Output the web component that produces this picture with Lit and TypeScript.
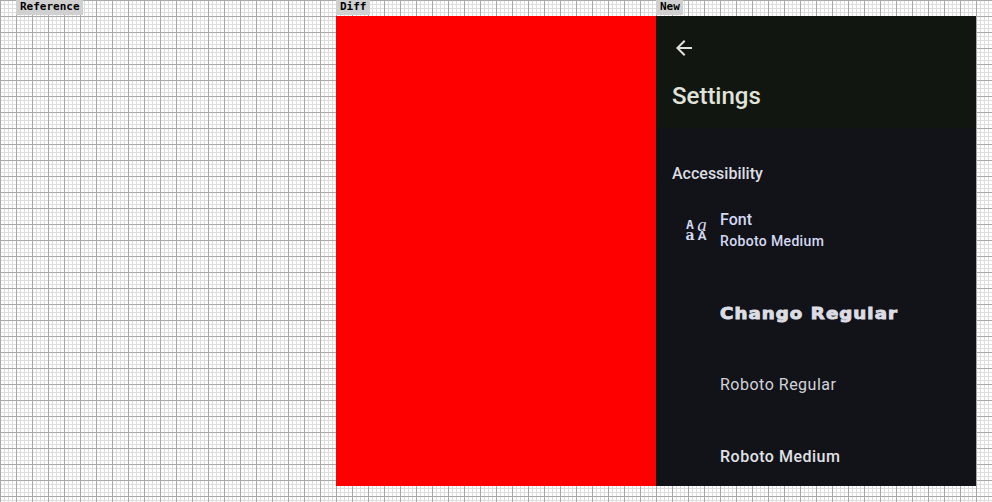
import { LitElement, html, css, svg } from "lit";
import { customElement } from "lit/decorators.js";

const backArrow = svg`<path d="M20 11H7.83l5.59-5.59L12 4l-8 8 8 8 1.41-1.41L7.83 13H20v-2z" fill="currentColor"/>`;

@customElement("app-root")
export class AppRoot extends LitElement {
  static styles = css`
    :host {
      display: block;
      width: 992px;
      height: 502px;
      overflow: hidden;
      font-family: Roboto, sans-serif;
      background-color: #fff;
      background-image:
        linear-gradient(#a8a8a8 1px, transparent 1px),
        linear-gradient(90deg, #a8a8a8 1px, transparent 1px),
        linear-gradient(#dedede 1px, transparent 1px),
        linear-gradient(90deg, #dedede 1px, transparent 1px);
      background-size: 16px 16px, 16px 16px, 4px 4px, 4px 4px;
    }
    .columns {
      display: grid;
      grid-template-columns: repeat(3, 320px);
      padding-left: 16px;
    }
    .tag-row {
      height: 16px;
    }
    .tag {
      width: fit-content;
      height: 15px;
      padding: 0 3px 0 4px;
      background: #d0d0d0;
      color: #000;
      font: bold 11px/14px "DejaVu Sans Mono", monospace;
    }
    .panel {
      height: 470px;
    }
    .diff {
      background: #ff0000;
    }
    .screen {
      background: #121319;
      overflow: hidden;
    }
    .app-bar {
      height: 112px;
      box-sizing: border-box;
      background: #111611;
      color: #e0e3da;
      padding: 20px 16px 0;
    }
    .back {
      display: block;
      width: 24px;
      height: 24px;
    }
    .title {
      margin-top: 20px;
      font-size: 24px;
      line-height: 32px;
      font-weight: 500;
    }
    .section {
      padding: 34px 16px 0;
      font-size: 16px;
      line-height: 24px;
      font-weight: 500;
      color: #dcdde3;
    }
    .header-row {
      display: flex;
      align-items: center;
      height: 72px;
      margin: 8px 0 10px;
      padding-left: 28px;
      gap: 12px;
      color: #d4d9f2;
    }
    .font-icon {
      width: 24px;
      height: 22px;
      flex: none;
      display: grid;
      grid-template-columns: 12px 12px;
      grid-template-rows: 11px 11px;
      justify-items: center;
      font-size: 13px;
      line-height: 11px;
      font-weight: 700;
    }
    .glyph-mono {
      font-family: "DejaVu Sans Mono", monospace;
    }
    .glyph-italic {
      font-family: "Liberation Serif", serif;
      font-style: italic;
      font-size: 19px;
      font-weight: 400;
    }
    .glyph-serif {
      font-family: "DejaVu Serif", serif;
      font-size: 14px;
    }
    .name {
      font-size: 16px;
      line-height: 22px;
      font-weight: 500;
    }
    .sub {
      font-size: 14px;
      line-height: 20px;
      font-weight: 500;
      letter-spacing: 0.35px;
    }
    .option {
      height: 72px;
      display: flex;
      align-items: center;
      padding-left: 64px;
      font-size: 16px;
      letter-spacing: 0.5px;
      color: #d2d3d9;
    }
    .chango {
      display: block;
      margin-top: 4px;
      font-family: "DejaVu Sans", sans-serif;
      font-weight: 700;
      font-size: 15px;
      letter-spacing: 0.9px;
      -webkit-text-stroke: 0.9px currentColor;
      transform: scaleX(1.21);
      transform-origin: left center;
      color: #dcdde3;
    }
    .medium {
      font-weight: 500;
      color: #e0e1e6;
    }
  `;

  render() {
    return html`
      <div class="columns tag-row">
        <div class="tag">Reference</div>
        <div class="tag">Diff</div>
        <div class="tag">New</div>
      </div>
      <div class="columns">
        <div class="panel"></div>
        <div class="panel diff"></div>
        <div class="panel screen">
          <div class="app-bar">
            <svg class="back" viewBox="0 0 24 24">${backArrow}</svg>
            <div class="title">Settings</div>
          </div>
          <div class="section">Accessibility</div>
          <div class="header-row">
            <div class="font-icon">
              <span class="glyph-mono">A</span>
              <span class="glyph-italic">a</span>
              <span class="glyph-serif">a</span>
              <span>A</span>
            </div>
            <div>
              <div class="name">Font</div>
              <div class="sub">Roboto Medium</div>
            </div>
          </div>
          <div class="option"><span class="chango">Chango Regular</span></div>
          <div class="option">Roboto Regular</div>
          <div class="option medium">Roboto Medium</div>
        </div>
      </div>
    `;
  }
}
